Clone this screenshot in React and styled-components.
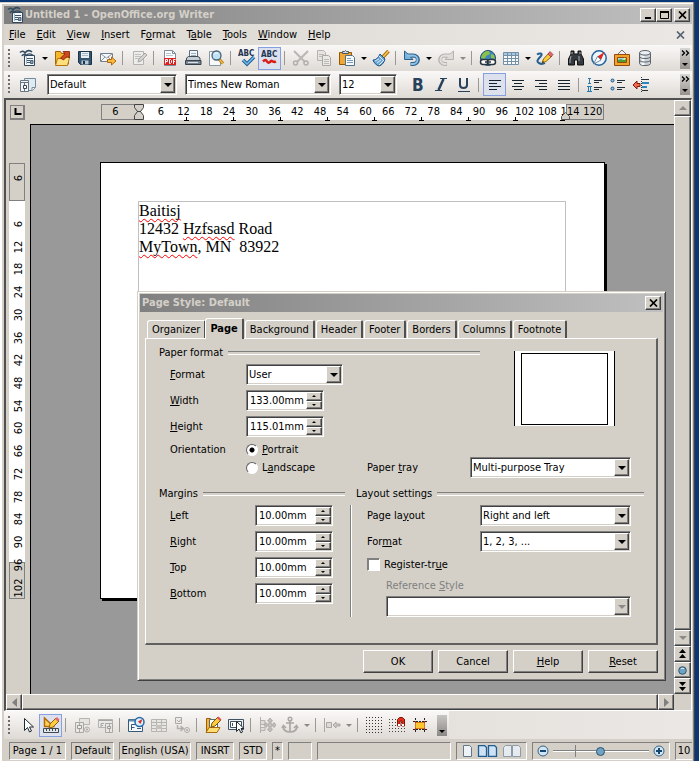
import { useState } from "react";
import styled, { createGlobalStyle, css } from "styled-components";

const hRuler = ["6", "", ...Array.from({ length: 20 }, (_, i) => String((i + 1) * 6))];
const vRuler = ["6", "", ...Array.from({ length: 17 }, (_, i) => String((i + 1) * 6))];

// Text with an underlined access key, marked by "_"
const Hot = ({ text }) => {
  const at = text.indexOf("_");
  if (at < 0) return <span>{text}</span>;
  return (
    <span>
      {text.slice(0, at)}
      <u>{text[at + 1]}</u>
      {text.slice(at + 2)}
    </span>
  );
};

const Svg = ({ w = 18, h = 18, children }) => (
  <svg width={w} height={h} viewBox={`0 0 ${w} ${h}`} fill="none" aria-hidden="true">
    {children}
  </svg>
);

const icons = {
  writer: (
    <Svg>
      <path d="M5.500 6.500h10v10h-10z" fill="#f4f8fb" stroke="#33485a" />
      <path d="M7.500 8v7" stroke="#9db7ca" />
      <path d="M8 9.500h6M8 11.500h3M8 13.500h3" stroke="#42586c" />
      <path d="M11.500 11.500h2.500v3h-2.500z" fill="#7fa5c2" stroke="#33485a" strokeWidth=".8" />
      <path d="M1 3.500c2-2 4-1.500 5 .5 2-3 5-3 7-1" stroke="#2f4a61" strokeWidth="1.600" />
      <path d="M3 7c1-2 3-2 4-.5 2-2 5-2 7 0" stroke="#2f4a61" strokeWidth="1.600" />
    </Svg>
  ),
  open: (
    <Svg>
      <path d="M2.500 15V2.500h5l1 2h7V15z" fill="#f5b72c" stroke="#a5620c" />
      <path d="M2.500 16.500l2-7h4l2-1h6l-2 8z" fill="#ffe07c" stroke="#b8740f" />
      <path d="M7.500 9l4.500-4-2-2.500h6.500v6.500l-2-2-4 4z" fill="#d2481e" stroke="#7e1e08" strokeWidth=".8" />
    </Svg>
  ),
  save: (
    <Svg>
      <path d="M2.500 2.500h13v13h-11l-2-2z" fill="#35556f" stroke="#1d3448" />
      <path d="M5 3h8v6H5z" fill="#e8eef2" />
      <path d="M6 4.500h6M6 6.500h6" stroke="#a9b8c4" />
      <path d="M5.500 11.500h7v4h-7z" fill="#b7cbd9" />
      <path d="M7 12h2v3H7z" fill="#1d3448" />
    </Svg>
  ),
  mail: (
    <Svg>
      <path d="M1.500 4.500h12v8h-12z" fill="#f5f7f8" stroke="#71808c" />
      <path d="M2 5l5.500 4L13 5M2 12l4-4M13 12L9 8" stroke="#8d9aa4" />
      <path d="M8.500 10.500h4v-2.500l4.500 4-4.500 4v-2.500h-4z" fill="#ffb938" stroke="#a55f08" strokeWidth=".9" />
    </Svg>
  ),
  edit: (
    <Svg>
      <path d="M3.500 2.500h10v13h-10z" fill="#ececea" stroke="#b5b3b0" />
      <path d="M5 5.500h6M5 7.500h6M5 9.500h4" stroke="#c2c0bd" />
      <path d="M8 13l1-3 6-6 2 2-6 6z" fill="#d5d3d0" stroke="#a8a6a3" />
    </Svg>
  ),
  pdf: (
    <Svg>
      <path d="M3.500 1.500h8l3 3v12h-11z" fill="#fbfcfd" stroke="#7d8d9a" />
      <path d="M11.500 1.500v3h3" stroke="#7d8d9a" />
      <path d="M5 4.500h5M5 6.500h7" stroke="#b8c3cc" />
      <path d="M3 9h12v7H3z" fill="#dd2020" />
      <path d="M4.500 14.500v-4h2v2h-2M8.500 10.500h1l1 1v2l-1 1h-1zM12.500 15v-4.500h2M12.500 12.500h1.500" stroke="#fff" />
    </Svg>
  ),
  print: (
    <Svg>
      <path d="M5.500 1.500h8v8h-8z" fill="#f1f6fa" stroke="#5d7182" />
      <path d="M7 4.500h5M7 6.500h5" stroke="#9fb0bd" />
      <path d="M2.500 9l2-1.500h9.500l2 1.500v5h-13.500z" fill="#c5ced5" stroke="#3f4d59" />
      <path d="M1.500 11.500h15.500v4H1.500z" fill="#79858f" stroke="#36424c" />
      <path d="M4 13.500h10" stroke="#dce3e8" />
    </Svg>
  ),
  preview: (
    <Svg>
      <path d="M2.500 2.500h9l2 2v12h-11z" fill="#f7f9fb" stroke="#8797a4" />
      <path d="M12 10l4 4.500" stroke="#b67a10" strokeWidth="3" />
      <path d="M12 10l4 4.500" stroke="#f5c14a" strokeWidth="1.200" />
      <circle cx="9.500" cy="6.500" r="4.500" fill="#bfe0f5" stroke="#47637a" strokeWidth="1.300" />
      <path d="M7 5.500c1-2 3-2 4-1" stroke="#fff" />
    </Svg>
  ),
  spell: (
    <Svg>
      <text x="0" y="7" fontSize="8" fontWeight="bold" fill="#1e3550">ABC</text>
      <path d="M5 11l4 4 7-7" stroke="#1f5f96" strokeWidth="3.500" />
      <path d="M5 11l4 4 7-7" stroke="#72bbea" strokeWidth="1.500" />
    </Svg>
  ),
  autospell: (
    <Svg>
      <text x="0" y="8" fontSize="8" fontWeight="bold" fill="#1e3550">ABC</text>
      <path d="M2 12.500c2-2 3-2 4 0 1 2 3 1 4-.5 1-1 2 2 5 .5" stroke="#d71d16" strokeWidth="2.500" />
    </Svg>
  ),
  cut: (
    <Svg>
      <path d="M2 2l11 11M16 2L5 13" stroke="#b9b7b4" strokeWidth="2" />
      <circle cx="3.500" cy="14" r="2" stroke="#b1afac" strokeWidth="1.500" />
      <circle cx="14" cy="14" r="2" stroke="#b1afac" strokeWidth="1.500" />
    </Svg>
  ),
  copy: (
    <Svg>
      <path d="M2.500 1.500h6l2 2v8h-8z" fill="#e6e4e1" stroke="#b5b3b0" />
      <path d="M4 5.500h5M4 7.500h5" stroke="#bdbbb8" />
      <path d="M7.500 6.500h6l2 2v8h-8z" fill="#ebe9e7" stroke="#aaa8a5" />
      <path d="M9 10.500h5M9 12.500h5M9 14.500h5" stroke="#bdbbb8" />
    </Svg>
  ),
  paste: (
    <Svg>
      <path d="M1.500 3.500h12v12h-12z" fill="#f0a832" stroke="#935708" />
      <path d="M4.500 4.500v-2h2l1-1 1 1h2v2z" fill="#d3d9de" stroke="#4c5a66" />
      <path d="M7.500 6.500h7l2 2v8h-9z" fill="#f6f9fb" stroke="#547086" />
      <path d="M9 9.500h4M9 11.500h6M9 13.500h6" stroke="#7d9db4" />
    </Svg>
  ),
  brush: (
    <Svg>
      <path d="M11 8l5.500-6" stroke="#a86a10" strokeWidth="3.500" />
      <path d="M11 8l5.500-6" stroke="#f8cb52" strokeWidth="1.500" />
      <path d="M8 5l5 5c-1 4-3 6-6 7-3-1-5-3-6-6 3 0 5-2 7-6z" fill="#6ba6d6" stroke="#1f527f" />
      <path d="M3 12l4-2M5 14l4-3M7 16l4-4M7 7l5 5" stroke="#d9edfb" />
    </Svg>
  ),
  undo: (
    <Svg>
      <path d="M5 6.500h5c6.500 0 6.500 8.500 0 8.500H7.500" stroke="#2d608b" strokeWidth="4" />
      <path d="M1.500 2v8.500H10L7.500 8h3V5.500H5.500z" fill="#79b2dc" stroke="#2d608b" />
      <path d="M4 6.500h6c6 0 6 8.500 0 8.500H8" stroke="#8cc2e8" strokeWidth="2" />
    </Svg>
  ),
  redo: (
    <Svg>
      <path d="M13 6.500H8c-6.500 0-6.500 8.500 0 8.500h2" stroke="#b5b3b0" strokeWidth="4" />
      <path d="M16.500 2v8.500H8L10.500 8h-3V5.500h5z" fill="#dddbd8" stroke="#b5b3b0" />
      <path d="M14 6.500H8c-6 0-6 8.500 0 8.500h1.500" stroke="#e2e0dd" strokeWidth="2" />
    </Svg>
  ),
  link: (
    <Svg>
      <circle cx="9" cy="9" r="7.500" fill="#3d86bc" stroke="#204c6c" />
      <path d="M3 6c2-4 5-4 7-4l1 3-4 2-1 3-4-1zM12 5l3 1 1 4-4-1z" fill="#8bc04a" />
      <rect x="1.500" y="10.500" width="8" height="5" rx="2.500" fill="#fff" stroke="#29353e" strokeWidth="1.500" />
      <rect x="8.500" y="10.500" width="8" height="5" rx="2.500" fill="#fff" stroke="#29353e" strokeWidth="1.500" />
      <path d="M6 13h6" stroke="#29353e" strokeWidth="1.500" />
    </Svg>
  ),
  table: (
    <Svg>
      <path d="M1.500 3.500h15v12h-15z" fill="#f7fafc" stroke="#7490a6" />
      <path d="M2 4h14v2H2z" fill="#a9c8df" />
      <path d="M1.500 6.500h15M1.500 9.500h15M1.500 12.500h15M5.500 3v12M9.500 3v12M13.500 3v12" stroke="#7490a6" />
    </Svg>
  ),
  draw: (
    <Svg>
      <path d="M1 5.500c3-2 6-1 4 1.500-2 2-3 3-3.500 4.500s3 5 7.500 2.500" stroke="#235f91" strokeWidth="2" />
      <path d="M6 14l1.500-4L13 4l3 3-6 5.500z" fill="#f9cf42" stroke="#93600d" />
      <path d="M12 5l2-2.500L17 5.500 15 8z" fill="#e5686e" stroke="#8d3238" strokeWidth=".7" />
      <path d="M6 14l1-2 1 1z" fill="#222" />
    </Svg>
  ),
  find: (
    <Svg>
      <path d="M4 2h3v3h4V2h3v3l2.500 5v6h-6v-5h-3v5h-6v-6L4 5z" fill="#343a3f" stroke="#111" />
      <path d="M4 7l-1 4v3M12 7v5M5 3v2M13 3v2" stroke="#a8adb1" />
    </Svg>
  ),
  compass: (
    <Svg>
      <circle cx="9" cy="9" r="7.200" fill="#e9f4fc" stroke="#24639b" strokeWidth="1.500" />
      <path d="M14.500 3L11 11 7.500 7.500z" fill="#dd2820" />
      <path d="M3.500 15L11 11 7.500 7.500z" fill="#fff" stroke="#53748e" strokeWidth=".8" />
    </Svg>
  ),
  gallery: (
    <Svg>
      <path d="M5 5l4-4 4 4" stroke="#6e6e6e" />
      <path d="M1.500 5.500h15v11h-15z" fill="#f0a52a" stroke="#96480f" />
      <path d="M4.500 8.500h9v5h-9z" fill="#a5d9f2" stroke="#96480f" />
      <path d="M5 13v-2l3-1 2 1 3-1v3z" fill="#4b9d35" />
      <circle cx="11.500" cy="9.800" r="1" fill="#fff17a" />
    </Svg>
  ),
  db: (
    <Svg>
      <path d="M3.500 4v10.500c0 2.700 11 2.700 11 0V4z" fill="#cdd2d6" stroke="#5c656c" />
      <path d="M5.500 6v10h3V7z" fill="#f6f8f9" />
      <ellipse cx="9" cy="3.800" rx="5.500" ry="2.300" fill="#eceff1" stroke="#5c656c" />
      <path d="M3.500 7.500c0 2.700 11 2.700 11 0M3.500 11c0 2.700 11 2.700 11 0" stroke="#5c656c" />
    </Svg>
  ),
  styles: (
    <Svg>
      <path d="M5.500 2.500h11v9l-3 3h-8z" fill="#dfeaf1" stroke="#758b9b" />
      <path d="M16 11.500h-3v3" stroke="#758b9b" fill="#fff" />
      <path d="M1.500 4.500h8v11h-8z" fill="#f3f5f6" stroke="#687682" />
      <path d="M1.500 6.500h8M5.500 7v8" stroke="#687682" />
      <path d="M4.500 9.500h3v3h-3z" fill="#fff" stroke="#384854" />
    </Svg>
  ),
  bold: (
    <Svg>
      <text x="3" y="15" fontSize="17" fontWeight="bold" fill="#27425a">B</text>
    </Svg>
  ),
  italic: (
    <Svg>
      <path d="M8 2.500h7M3 14.500h7" stroke="#27425a" />
      <path d="M11.500 3L6.500 14" stroke="#27425a" strokeWidth="2.500" />
    </Svg>
  ),
  underline: (
    <Svg>
      <path d="M5 2v7c0 4 7 4 7 0V2" stroke="#27425a" strokeWidth="2" />
      <path d="M3 15.500h12" stroke="#27425a" />
    </Svg>
  ),
  left: <Svg><path d="M3 4.500h12M3 7.500h8M3 10.500h12M3 13.500h8" stroke="#16222c" /></Svg>,
  center: <Svg><path d="M3 4.500h12M5 7.500h8M3 10.500h12M5 13.500h8" stroke="#16222c" /></Svg>,
  right: <Svg><path d="M3 4.500h12M7 7.500h8M3 10.500h12M7 13.500h8" stroke="#16222c" /></Svg>,
  justify: <Svg><path d="M3 4.500h12M3 7.500h12M3 10.500h12M3 13.500h12" stroke="#16222c" /></Svg>,
  numbering: (
    <Svg>
      <path d="M8 4.500h8M8 6.500h5M8 11.500h8M8 13.500h5" stroke="#222e38" />
      <path d="M2 2.500h3M3.500 3v4M2 7.500h3M1 10.500h5M2.500 11v4M4.500 11v4M1 15.500h5" stroke="#2d7aa8" />
    </Svg>
  ),
  bullets: (
    <Svg>
      <path d="M8 4.500h8M8 6.500h5M8 11.500h8M8 13.500h5" stroke="#222e38" />
      <circle cx="3.500" cy="4.500" r="1.500" fill="#8cc8ee" stroke="#205078" />
      <circle cx="3.500" cy="12.500" r="1.500" fill="#8cc8ee" stroke="#205078" />
    </Svg>
  ),
  outdent: (
    <Svg>
      <path d="M9 3.500h8M10 14.500h6" stroke="#222e38" />
      <path d="M10 7h7M10 11h5" stroke="#2a86bb" strokeWidth="2" />
      <path d="M9.500 1v16" stroke="#333" strokeDasharray="1 1" />
      <path d="M1 9l4-4v2.500h3v3H5V13z" fill="#f06a4c" stroke="#861b0b" />
    </Svg>
  ),
  pointer: (
    <Svg>
      <path d="M5.500 2.500v12l3-3 2 4.500 2-1-2-4h4z" fill="#fff" stroke="#1d2935" />
    </Svg>
  ),
  design: (
    <Svg>
      <path d="M2.500 2v8.500h9z" fill="#ffd25c" stroke="#b16c08" strokeWidth="1.500" />
      <path d="M1.500 12.500h15v4h-15z" fill="#e2e7ea" stroke="#3d4a54" />
      <path d="M4.500 13v2M7.500 13v2M10.500 13v2M13.500 13v2" stroke="#3d4a54" />
      <path d="M7 12l1-4 6-6 3 3-6 6z" fill="#ffce3c" stroke="#915d0c" />
      <path d="M13 3l2-2 2.500 2.500L15.500 5.500z" fill="#e96a70" />
    </Svg>
  ),
  control: (
    <Svg>
      <path d="M6.500 5.500v-3h10v6h-6" fill="#e6e4e1" stroke="#b7b5b2" />
      <path d="M2.500 6.500h8v10h-8zM6.500 7v9" fill="#e9e7e4" stroke="#aaa8a5" />
      <path d="M4.500 9.500h4v3h-4z" fill="#eee" stroke="#999" />
      <circle cx="14" cy="13.500" r="2.500" stroke="#b0aeab" />
      <circle cx="14" cy="13.500" r="1" fill="#aaa8a5" />
    </Svg>
  ),
  form: (
    <Svg>
      <path d="M2.500 3.500h14v8h-14z" fill="#ebe9e7" stroke="#b5b3b0" />
      <path d="M2.500 4.500h14M5 11V7.500h3M5 9.500h2" stroke="#a8a6a3" />
      <path d="M9.500 7.500h7v9h-7zM13.500 8v8" fill="#e9e7e4" stroke="#aaa8a5" />
      <path d="M11.500 10.500h3v2h-3z" fill="#eee" stroke="#999" />
    </Svg>
  ),
  formNav: (
    <Svg>
      <path d="M1.500 3.500h14v12h-14z" fill="#f4f8fb" stroke="#385977" />
      <path d="M2 4.500h13" stroke="#5e8bb0" strokeWidth="2" />
      <path d="M4.500 14V8.500H8M4.500 11.500h3M10 12.500h4" stroke="#385977" />
      <circle cx="12.500" cy="6" r="4.500" fill="#dbeefc" stroke="#2769a4" strokeWidth="1.500" />
      <path d="M15.500 3L13.500 8 11 5.500z" fill="#dc2b20" />
    </Svg>
  ),
  grayTable: (
    <Svg>
      <path d="M1.500 3.500h15v12h-15zM2 6.500h14M2 9.500h14M2 12.500h14M6.500 4v11M11.500 4v11" fill="#e8e6e3" stroke="#b7b5b2" />
      <path d="M6 9h6v4H6z" fill="#c4c2bf" />
    </Svg>
  ),
  tabOrder: (
    <Svg>
      <path d="M2.500 1.500h6v6h-6zM4 4l2 2 3-4" fill="#ebe9e7" stroke="#aaa8a5" />
      <path d="M4.500 9v3.500h5M7.500 10l3 2.500-3 2.500" stroke="#b0aeab" strokeWidth="1.500" />
      <circle cx="14" cy="14" r="2.500" stroke="#b0aeab" />
      <circle cx="14" cy="14" r="1" fill="#aaa8a5" />
    </Svg>
  ),
  openDesign: (
    <Svg>
      <path d="M2.500 15V2.500h4l1 2h5V15z" fill="#f6b730" stroke="#9c600c" />
      <path d="M5.500 3.500h8v9h-8z" fill="#fff" stroke="#576b7a" />
      <path d="M2 16.500l3-5h11l-3 5z" fill="#ffdd72" stroke="#a5690e" />
      <path d="M7 11l1-4 6-6 3 3-6 6z" fill="#ffce3c" stroke="#79500d" />
      <path d="M13 2l1.500-1.500 3 3L16 5z" fill="#df4c54" />
    </Svg>
  ),
  autoFocus: (
    <Svg>
      <path d="M1.500 3.500h15v10h-15z" fill="#eef2f5" stroke="#3f5261" />
      <path d="M3.500 5.500h11v6h-11zM5.500 7v3" fill="#fff" stroke="#3f5261" />
      <path d="M9.500 5.500v10l2.500-2.500 2 4 1.500-1-1.500-3.500h3z" fill="#fff" stroke="#1d2935" />
    </Svg>
  ),
  position: (
    <Svg>
      <path d="M2.500 1v16M3 4.500h4v4H3M3 11.500h4v3H3" fill="#dedcd9" stroke="#b3b1ae" />
      <path d="M12 2l2.500 3H13v3h3V6.500L18 9l-2 2.500V10h-3v3h1.500L12 16l-2.500-3H11v-3H8v1.500L6 9l2-2.500V8h3V5H9.500z" fill="#c5c3c0" stroke="#a3a19e" strokeWidth=".8" />
    </Svg>
  ),
  anchor: (
    <Svg>
      <circle cx="9" cy="3" r="1.800" stroke="#aaa8a5" strokeWidth="1.500" />
      <path d="M9 5v11M5 7h8M2 10c0 4 3 6 7 6s7-2 7-6M1 12l1.500-2.500L5 12M13 12l2.500-2.500L17 12" stroke="#aaa8a5" strokeWidth="1.700" />
    </Svg>
  ),
  align: (
    <Svg>
      <path d="M1.500 2v14" stroke="#aaa8a5" />
      <path d="M3.500 6.500h5v5h-5z" fill="#dcdad7" stroke="#aaa8a5" />
      <path d="M10 9l3-3v2h4v2h-4v2z" fill="#cbc9c6" stroke="#aaa8a5" />
    </Svg>
  ),
  grid: (
    <Svg>
      {[1, 4, 7, 10, 13, 16].map((y) => (
        <path key={y} d={`M1 ${y}.500h16`} stroke="#333" strokeDasharray="1 2" />
      ))}
    </Svg>
  ),
  snap: (
    <Svg>
      {[3, 6, 9, 12, 15].map((y) => (
        <path key={y} d={`M1 ${y}.500h16`} stroke="#444" strokeDasharray="1 2" />
      ))}
      <path d="M9.500 10V3.500l2-2h3l2 2V10h-2.500V5h-2v5z" fill="#df301b" stroke="#851307" />
      <path d="M10 8h2v2h-2zM14 8h2v2h-2z" fill="#fff" />
    </Svg>
  ),
  guides: (
    <Svg>
      <path d="M4.500 2v15M13.500 2v15M2 5.500h14M2 13.500h14" stroke="#222" strokeDasharray="2 1" />
      <path d="M4.500 6.500h9v6h-9z" fill="#fdc52f" stroke="#d4761a" />
      <path d="M4 5h1v2H4zM13 5h1v2h-1zM4 12h1v2H4zM13 12h1v2h-1z" fill="#c6301c" />
    </Svg>
  ),
};

const standardBar = [
  ["writer", "New", "drop"], ["open", "Open"], ["save", "Save"], ["mail", "E-mail"], "|",
  ["edit", "Edit File"], "|",
  ["pdf", "Export PDF"], ["print", "Print"], ["preview", "Page Preview"], "|",
  ["spell", "Spellcheck"], ["autospell", "AutoSpellcheck", "on"], "|",
  ["cut", "Cut"], ["copy", "Copy"], ["paste", "Paste", "drop"], ["brush", "Format Paintbrush"], "|",
  ["undo", "Undo", "drop"], ["redo", "Redo", "grayDrop"], "|",
  ["link", "Hyperlink"], ["table", "Insert Table", "drop"], ["draw", "Draw Functions"], "|",
  ["find", "Find"], ["compass", "Navigator"], ["gallery", "Gallery"], ["db", "Data Sources"],
];

const formatBar = [
  ["bold", "Bold"], ["italic", "Italic"], ["underline", "Underline"], "|",
  ["left", "Align Left", "on"], ["center", "Centered"], ["right", "Align Right"], ["justify", "Justified"], "|",
  ["numbering", "Numbering"], ["bullets", "Bullets"], ["outdent", "Decrease Indent"],
];

const designBar = [
  ["pointer", "Select"], ["design", "Design Mode", "on"], "|",
  ["control", "Control"], ["form", "Form"], "|",
  ["formNav", "Form Navigator"], ["grayTable", "Add Field"], ["tabOrder", "Activation Order"], "|",
  ["openDesign", "Open in Design Mode"], ["autoFocus", "Automatic Focus"], "|",
  ["position", "Position and Size"], ["anchor", "Anchor", "grayDrop"], "|",
  ["align", "Alignment", "grayDrop"], "|",
  ["grid", "Display Grid"], ["snap", "Snap to Grid"], ["guides", "Guides"],
];

const Tools = ({ items }) =>
  items.map((item, i) => {
    if (item === "|") return <Separator key={i} />;
    const [icon, label, state] = item;
    const hasDrop = state === "drop" || state === "grayDrop";
    return (
      <ToolGroup key={i}>
        <ToolButton type="button" aria-label={label} $on={state === "on"}>
          {icons[icon]}
        </ToolButton>
        {hasDrop && (
          <DropButton type="button" aria-label={`${label} options`}>
            <Arrow $gray={state === "grayDrop"} />
          </DropButton>
        )}
      </ToolGroup>
    );
  });

const Combo = ({ id, label, value, width, gap, disabled }) => (
  <ComboBox $width={width} $gap={gap}>
    <ComboSelect id={id} aria-label={label} defaultValue={value} disabled={disabled}>
      <option>{value}</option>
    </ComboSelect>
    <ComboArrow>
      <Arrow $big $gray={disabled} />
    </ComboArrow>
  </ComboBox>
);

const Spin = ({ id, value }) => (
  <SpinBox>
    <SpinInput id={id} defaultValue={value} />
    <SpinButtons>
      <SpinButton type="button" aria-label="Increase">
        <Arrow $up />
      </SpinButton>
      <SpinButton type="button" aria-label="Decrease">
        <Arrow />
      </SpinButton>
    </SpinButtons>
  </SpinBox>
);

const Field = ({ id, label, labelWidth, children }) => (
  <FieldRow>
    <FieldLabel htmlFor={id} $width={labelWidth}>
      <Hot text={label} />
    </FieldLabel>
    {children}
  </FieldRow>
);

const CloseGlyph = ({ color = "#000" }) => (
  <Svg w={9} h={8}>
    <path d="M1 0.500l7 7M8 0.500l-7 7" stroke={color} strokeWidth="1.700" />
  </Svg>
);

const Overflow = () => (
  <OverflowButton type="button" aria-label="More controls">
    <Svg w={9} h={6}>
      <path d="M1 0.500L3.500 3 1 5.500M5 0.500L7.500 3 5 5.500" stroke="#000" strokeWidth="1.300" />
    </Svg>
    <Arrow $mid />
  </OverflowButton>
);

const PageStyleDialog = () => {
  const [tab, setTab] = useState("Page");
  const [orientation, setOrientation] = useState("portrait");
  const tabs = ["Organizer", "Page", "Background", "Header", "Footer", "Borders", "Columns", "Footnote"];

  return (
    <Dialog role="dialog" aria-label="Page Style: Default">
      <TitleBar>
        <Title>Page Style: Default</Title>
        <TitleButton type="button" aria-label="Close dialog">
          <CloseGlyph />
        </TitleButton>
      </TitleBar>

      <Tabs role="tablist">
        {tabs.map((name) => (
          <Tab key={name} type="button" role="tab" aria-selected={tab === name} $on={tab === name} onClick={() => setTab(name)}>
            {name}
          </Tab>
        ))}
      </Tabs>

      <Panel>
        <PaperRow>
          <PaperGroup>
            <Legend>Paper format</Legend>
            <Fields>
              <Field id="format" label="_Format" labelWidth={76}>
                <Combo id="format" value="User" width={97} />
              </Field>
              <Field id="width" label="_Width" labelWidth={76}>
                <Spin id="width" value="133.00mm" />
              </Field>
              <Field id="height" label="_Height" labelWidth={76}>
                <Spin id="height" value="115.01mm" />
              </Field>
            </Fields>
          </PaperGroup>
          <Preview>
            <PreviewPage />
          </Preview>
        </PaperRow>

        <OrientationRow>
          <OrientationLabel>Orientation</OrientationLabel>
          <Radios>
            <Choice>
              <Radio type="radio" name="orientation" checked={orientation === "portrait"} onChange={() => setOrientation("portrait")} />
              <Hot text="_Portrait" />
            </Choice>
            <Choice>
              <Radio type="radio" name="orientation" checked={orientation === "landscape"} onChange={() => setOrientation("landscape")} />
              <Hot text="L_andscape" />
            </Choice>
          </Radios>
          <TrayField>
            <Field id="tray" label="Paper _tray" labelWidth={103}>
              <Combo id="tray" value="Multi-purpose Tray" width={161} />
            </Field>
          </TrayField>
        </OrientationRow>

        <SettingsRow>
          <MarginsGroup>
            <Legend>Margins</Legend>
            <Fields>
              {["_Left", "_Right", "_Top", "_Bottom"].map((name) => (
                <Field key={name} id={name} label={name} labelWidth={85}>
                  <Spin id={name} value="10.00mm" />
                </Field>
              ))}
            </Fields>
          </MarginsGroup>
          <Divider />
          <LayoutGroup>
            <Legend>Layout settings</Legend>
            <Fields>
              <Field id="layout" label="Page la_yout" labelWidth={113}>
                <Combo id="layout" value="Right and left" width={151} />
              </Field>
              <Field id="numbers" label="For_mat" labelWidth={113}>
                <Combo id="numbers" value="1, 2, 3, ..." width={151} />
              </Field>
              <RegisterGroup>
                <Choice>
                  <CheckBox type="checkbox" />
                  <Hot text="Register-tr_ue" />
                </Choice>
                <ReferenceField>
                  <label htmlFor="reference">
                    <Hot text="Reference _Style" />
                  </label>
                  <Combo id="reference" value="" width={245} disabled />
                </ReferenceField>
              </RegisterGroup>
            </Fields>
          </LayoutGroup>
        </SettingsRow>
      </Panel>

      <DialogButtons>
        <PushButton type="button">OK</PushButton>
        <PushButton type="button">Cancel</PushButton>
        <PushButton type="button"><Hot text="_Help" /></PushButton>
        <PushButton type="button"><Hot text="_Reset" /></PushButton>
      </DialogButtons>
    </Dialog>
  );
};

const App = () => {
  return (
    <Desktop>
      <GlobalStyle />
      <Window>
        <TitleBar>
          {icons.writer}
          <Title>Untitled 1 - OpenOffice.org Writer</Title>
          <TitleButton type="button" aria-label="Minimize">
            <Svg w={9} h={8}><path d="M1 7h6" stroke="#000" strokeWidth="2" /></Svg>
          </TitleButton>
          <TitleButton type="button" aria-label="Maximize">
            <Svg w={9} h={8}><path d="M.5 0v7.500h8V0M0 1h9" stroke="#000" /><path d="M0 1h9" stroke="#000" strokeWidth="2" /></Svg>
          </TitleButton>
          <TitleButton type="button" aria-label="Close" $apart>
            <CloseGlyph />
          </TitleButton>
        </TitleBar>

        <MenuBar>
          {["_File", "_Edit", "_View", "_Insert", "F_ormat", "T_able", "_Tools", "_Window", "_Help"].map((name) => (
            <MenuItem key={name} type="button"><Hot text={name} /></MenuItem>
          ))}
          <CloseDocument type="button" aria-label="Close document">
            <CloseGlyph color="#556270" />
          </CloseDocument>
        </MenuBar>

        <ToolBar>
          <Grip />
          <Tools items={standardBar} />
          <Overflow />
        </ToolBar>
        <ToolBar>
          <Grip />
          <Tools items={[["styles", "Styles and Formatting"]]} />
          <Combo label="Apply style" value="Default" width={130} gap={8} />
          <Combo label="Font name" value="Times New Roman" width={146} gap={8} />
          <Combo label="Font size" value="12" width={58} gap={8} />
          <Spacer />
          <Tools items={formatBar} />
          <Overflow />
        </ToolBar>

        <Workspace>
          <Editor>
            <RulerRow>
              <TabCorner type="button" aria-label="Tab type">
                <Svg w={8} h={8}><path d="M1.500 0v6h6" stroke="#000" strokeWidth="2" /></Svg>
              </TabCorner>
              <HRuler>
                <RulerEdge $size={38} />
                <RulerBody />
                <RulerEdge $size={38} />
                <HLabels>{hRuler.map((n, i) => <RulerCell key={i}>{n}</RulerCell>)}</HLabels>
                <TabStops>
                  {Array.from({ length: 9 }, (_, i) => <TabStop key={i} />)}
                </TabStops>
                <Indent>
                  <Svg w={11} h={16}>
                    <path d="M.5.500h9v3l-3 4 3 4v4h-9v-4l3-4-3-4z" fill="#d4d0c8" stroke="#444" />
                    <path d="M3 7.500h4" stroke="#444" />
                  </Svg>
                </Indent>
                <EndIndent>
                  <Svg w={9} h={8}><path d="M.5 7.500v-3l4-4 4 4v3z" fill="#d4d0c8" stroke="#555" /></Svg>
                </EndIndent>
              </HRuler>
            </RulerRow>
            <EditorBody>
              <VRulerColumn>
                <VRuler>
                  <RulerEdge $size={38} />
                  <RulerBody />
                  <RulerEdge $size={37} />
                  <VLabels>{vRuler.map((n, i) => <RulerCell key={i}><Turned>{n}</Turned></RulerCell>)}</VLabels>
                </VRuler>
              </VRulerColumn>
              <Canvas>
                <Paper>
                  <TextFrame>
                    <p><Misspelt>Baitisj</Misspelt></p>
                    <p>12432 <Misspelt>Hzfsasd</Misspelt> Road</p>
                    <p><Misspelt>MyTown</Misspelt>, MN&nbsp; 83922</p>
                  </TextFrame>
                </Paper>
              </Canvas>
            </EditorBody>
            <HScroll>
              <ScrollButton type="button" aria-label="Scroll left">
                <Svg w={5} h={9}><path d="M5 0v9L0 4.500z" fill="#808080" /></Svg>
              </ScrollButton>
              <ScrollThumb />
              <ScrollButton type="button" aria-label="Scroll right">
                <Svg w={5} h={9}><path d="M0 0v9l5-4.500z" fill="#808080" /></Svg>
              </ScrollButton>
            </HScroll>
          </Editor>
          <VScroll>
            <ScrollButton type="button" aria-label="Scroll up"><Arrow $big $up $gray /></ScrollButton>
            <ScrollThumb />
            <ScrollButton type="button" aria-label="Scroll down"><Arrow $big $gray /></ScrollButton>
            <ScrollButton type="button" aria-label="Previous page">
              <Svg w={9} h={10}><path d="M4.500 0L8 4H1zM4.500 5L8 9H1z" fill="#000" /></Svg>
            </ScrollButton>
            <ScrollButton type="button" aria-label="Navigation">
              <Svg w={9} h={9}><circle cx="4.500" cy="4.500" r="3.800" fill="#6fa3c4" stroke="#2d526d" /><path d="M3 2.500h3" stroke="#d5e8f4" /></Svg>
            </ScrollButton>
            <ScrollButton type="button" aria-label="Next page">
              <Svg w={9} h={10}><path d="M4.500 5L8 1H1zM4.500 10L8 6H1z" fill="#000" /></Svg>
            </ScrollButton>
          </VScroll>
        </Workspace>

        <DesignBar>
          <DesignTools>
            <Grip />
            <Tools items={designBar} />
            <BarEnd type="button" aria-label="Toolbar options"><Arrow $mid /></BarEnd>
          </DesignTools>
        </DesignBar>

        <StatusBar>
          <StatusCell $width={57}>Page 1 / 1</StatusCell>
          <StatusCell $width={43}>Default</StatusCell>
          <StatusCell $width={72}>English (USA)</StatusCell>
          <StatusCell $width={38}>INSRT</StatusCell>
          <StatusCell $width={28}>STD</StatusCell>
          <StatusCell $width={11}>*</StatusCell>
          <StatusCell $width={24} />
          <StatusCell $grow />
          <StatusCell $width={71}>
            <Svg w={58} h={12}>
              <path d="M.5.500h6l2 2v9h-8z" fill="#eef3f7" stroke="#60788b" />
              <path d="M15.500.500h6l2 2v9h-8zM25.500.500h6l2 2v9h-8z" fill="#cde3f5" stroke="#215d92" strokeWidth="1.300" />
              <path d="M42.500.500h6v11h-8v-9zM49.500.500h6l2 2v9h-8z" fill="#e6ebef" stroke="#8c9ba7" />
            </Svg>
          </StatusCell>
          <StatusCell $width={138}>
            <ZoomButton type="button" aria-label="Zoom out">
              <Svg w={12} h={12}><circle cx="6" cy="6" r="5" fill="#cfe6f7" stroke="#3d5f7c" /><path d="M3 6h6" stroke="#14466e" strokeWidth="2" /></Svg>
            </ZoomButton>
            <ZoomSlider type="range" aria-label="Zoom" min="0" max="100" defaultValue="49" />
            <ZoomButton type="button" aria-label="Zoom in">
              <Svg w={12} h={12}><circle cx="6" cy="6" r="5" fill="#cfe6f7" stroke="#3d5f7c" /><path d="M3 6h6M6 3v6" stroke="#14466e" strokeWidth="2" /></Svg>
            </ZoomButton>
          </StatusCell>
          <StatusCell $width={17} $last>10</StatusCell>
        </StatusBar>
      </Window>
      <PageStyleDialog />
    </Desktop>
  );
};

const GlobalStyle = createGlobalStyle`
  * {
    box-sizing: border-box;
  }

  body {
    margin: 0;
    background-color: #0a3775;
    overflow: hidden;
  }

  body, button, input, select {
    font-family: "DejaVu Sans Condensed", "DejaVu Sans", sans-serif;
    font-size: 11px;
    line-height: 14px;
    color: #000;
  }

  button {
    padding: 0;
  }

  svg {
    display: block;
    flex-shrink: 0;
  }
`;

const raised = css`
  border: 1px solid;
  border-color: #fff #404040 #404040 #fff;
  box-shadow: inset -1px -1px 0 #808080;
  background-color: #d4d0c8;
`;

const sunken = css`
  border: 1px solid;
  border-color: #808080 #fff #fff #808080;
  box-shadow: inset 1px 1px 0 #404040, inset -1px -1px 0 #d4d0c8;
  background-color: #fff;
`;

const Desktop = styled.div`
  position: relative;
  display: flex;
  min-height: 100vh;
  padding: 2px 4px 0 0;
`;

const Window = styled.main`
  flex: 1;
  min-width: 0;
  display: flex;
  flex-direction: column;
  padding: 4px 3px 0 4px;
  background-color: #d4d0c8;
  box-shadow: inset -1px 0 0 #404040, inset -2px 0 0 #808080, inset 0 1px 0 #d4d0c8, inset 2px 2px 0 #fff;
`;

const TitleBar = styled.header`
  display: flex;
  align-items: center;
  height: 18px;
  padding: 0 2px 0 3px;
  background: linear-gradient(to right, #808080, #c0c0c0);
`;

const Title = styled.h1`
  flex: 1;
  margin: 0;
  font-size: 11px;
  color: #d4d0c8;

  ${TitleBar} > &:first-child {
    margin-left: -1px;
  }
`;

const TitleButton = styled.button`
  ${raised}
  display: flex;
  justify-content: center;
  align-items: center;
  width: 16px;
  height: 14px;
  margin-left: ${({ $apart }) => ($apart ? "2px" : "0")};
`;

const MenuBar = styled.nav`
  display: flex;
  align-items: center;
  height: 21px;
  background: linear-gradient(to right, #dad6cf, #ebe7e4);
`;

const MenuItem = styled.button`
  border: none;
  background: none;
  padding: 0 6px 0 5px;
`;

const CloseDocument = styled.button`
  border: none;
  background: none;
  margin: 0 7px 0 auto;
`;

const ToolBar = styled.div`
  display: flex;
  align-items: center;
  height: 26px;
  padding-right: 2px;
  background: linear-gradient(#faf8f7, #dedad5);

  & + & {
    height: 27px;
  }
`;

const Grip = styled.div`
  flex-shrink: 0;
  width: 2px;
  height: 19px;
  margin: 0 6px 0 4px;
  background: repeating-linear-gradient(#706e6a 0 2px, transparent 2px 4px);
`;

const ToolGroup = styled.div`
  display: flex;
  flex-shrink: 0;
`;

const ToolButton = styled.button`
  display: flex;
  justify-content: center;
  align-items: center;
  width: 23px;
  height: 23px;
  border: 1px solid ${({ $on }) => ($on ? "#86a0df" : "transparent")};
  background-color: ${({ $on }) => ($on ? "#dde1ee" : "transparent")};
`;

const DropButton = styled.button`
  display: flex;
  justify-content: center;
  align-items: center;
  width: 11px;
  border: none;
  background: none;
`;

const Separator = styled.div`
  flex-shrink: 0;
  width: 1px;
  height: 14px;
  margin: 0 4px 0 3px;
  background-color: #9a9894;
`;

const Spacer = styled.div`
  width: 9px;
`;

const arrowSize = ({ $big, $mid }) => ($big ? 4 : $mid ? 3 : 2);

const Arrow = styled.span`
  width: 0;
  height: 0;
  border: ${arrowSize}px solid transparent;
  ${({ $up, $gray }) => {
    const edge = $up ? "bottom" : "top";
    const hidden = $up ? "top" : "bottom";
    return css`
      border-${edge}-color: ${$gray ? "#8c8a86" : "#000"};
      border-${hidden}-width: 0;
    `;
  }}

  ${DropButton} & {
    border-width: 3px 3px 0;
  }
`;

const OverflowButton = styled.button`
  display: flex;
  flex-direction: column;
  justify-content: space-between;
  align-items: center;
  width: 10px;
  height: 21px;
  margin-left: auto;
  padding: 2px 0 3px;
  border: none;
  background: linear-gradient(#d8d6d2, #96938e);
`;

const ComboBox = styled.div`
  ${sunken}
  position: relative;
  flex-shrink: 0;
  width: ${({ $width }) => $width}px;
  height: 21px;
  margin-left: ${({ $gap = 0 }) => $gap}px;
`;

const ComboSelect = styled.select`
  appearance: none;
  display: block;
  width: 100%;
  height: 19px;
  padding: 0 18px 0 2px;
  border: none;
  background: none;
`;

const ComboArrow = styled.span`
  ${raised}
  position: absolute;
  top: 1px;
  right: 1px;
  bottom: 1px;
  width: 15px;
  display: flex;
  justify-content: center;
  align-items: center;
  pointer-events: none;
`;

const Workspace = styled.section`
  flex: 1;
  display: flex;
  border: solid;
  border-width: 2px 1px 1px 2px;
  border-color: #505050 #fff #fff #505050;
`;

const Editor = styled.div`
  flex: 1;
  min-width: 0;
  display: flex;
  flex-direction: column;
`;

const RulerRow = styled.div`
  display: flex;
  align-items: center;
  height: 24px;
  padding-left: 4px;
`;

const TabCorner = styled.button`
  ${raised}
  display: flex;
  justify-content: center;
  align-items: center;
  width: 15px;
  height: 15px;
  border-color: #808080;
`;

const HRuler = styled.div`
  position: relative;
  display: flex;
  width: 503px;
  height: 16px;
  margin-left: 76px;
`;

const RulerEdge = styled.div`
  flex: 0 0 ${({ $size }) => $size}px;
  border: 1px solid #808080;
`;

const RulerBody = styled.div`
  flex: 1;
  background-color: #fff;
`;

const HLabels = styled.div`
  position: absolute;
  inset: 0 0 0 3px;
  display: flex;
  align-items: center;
`;

const RulerCell = styled.div`
  flex: 1 1 0;
  min-width: 0;
  min-height: 0;
  display: flex;
  justify-content: center;
  align-items: center;
`;

const TabStops = styled.div`
  position: absolute;
  left: 62px;
  bottom: -1px;
  display: flex;
`;

const TabStop = styled.div`
  width: 5px;
  height: 4px;
  margin: 0 21px;
  border-bottom: 1px solid #000;
  background: linear-gradient(#000, #000) 2px 0 / 1px 3px no-repeat;
`;

const Indent = styled.div`
  position: absolute;
  left: 33px;
  top: 0;
`;

const EndIndent = styled.div`
  position: absolute;
  right: 34px;
  bottom: 0;
`;

const EditorBody = styled.div`
  flex: 1;
  display: flex;
`;

const VRulerColumn = styled.div`
  width: 24px;
  padding: 39px 0 0 3px;
`;

const VRuler = styled.div`
  position: relative;
  display: flex;
  flex-direction: column;
  width: 16px;
  height: 436px;
`;

const VLabels = styled.div`
  position: absolute;
  inset: 4px 0 0 4px;
  display: flex;
  flex-direction: column;
`;

const Turned = styled.span`
  transform: rotate(-90deg);
`;

const Canvas = styled.div`
  flex: 1;
  min-width: 0;
  padding: 37px 0 0 69px;
  border: solid #000;
  border-width: 1px 0 0 1px;
  background-color: #999;
  overflow: hidden;
`;

const Paper = styled.article`
  width: 505px;
  height: 437px;
  padding: 38px 38px 38px 37px;
  border: 1px solid #000;
  background-color: #fff;
  box-shadow: 2px 2px 0 #000;
`;

const TextFrame = styled.div`
  height: 100%;
  border: 1px solid #c0c0c0;
  font-family: "Liberation Serif", serif;
  font-size: 16px;
  line-height: 18px;

  p {
    margin: 0;
  }
`;

const Misspelt = styled.span`
  text-decoration: underline wavy #f00 1px;
  text-decoration-skip-ink: none;
  text-underline-offset: 2px;
`;

const ScrollButton = styled.button`
  ${raised}
  flex: 0 0 16px;
  display: flex;
  justify-content: center;
  align-items: center;
`;

const ScrollThumb = styled.div`
  ${raised}
  flex: 1;
`;

const HScroll = styled.div`
  display: flex;
  height: 16px;
`;

const VScroll = styled.div`
  display: flex;
  flex-direction: column;
  width: 17px;
  padding-bottom: 16px;
`;

const DesignBar = styled.div`
  display: flex;
  height: 28px;
  background: linear-gradient(to right, #dad6cf, #ebe7e4);
`;

const DesignTools = styled.div`
  display: flex;
  align-items: center;
  background: linear-gradient(#faf8f7, #dedad5);
`;

const BarEnd = styled.button`
  display: flex;
  justify-content: center;
  align-items: flex-end;
  width: 10px;
  height: 21px;
  margin: 0 2px 0 6px;
  padding-bottom: 3px;
  border: none;
  background: linear-gradient(#c8c6c2, #8b8985);
`;

const StatusBar = styled.footer`
  display: flex;
  align-items: center;
  gap: 5px;
  height: 22px;
  padding: 2px 0 0 5px;
`;

const StatusCell = styled.div`
  display: flex;
  justify-content: center;
  align-items: center;
  flex: ${({ $grow, $width }) => ($grow ? "1 1 0" : `0 0 ${$width}px`)};
  min-width: 0;
  height: 18px;
  border: 1px solid;
  border-color: #808080 #fff #fff #808080;
  border-right-width: ${({ $last }) => ($last ? "0" : "1px")};
  white-space: nowrap;
`;

const ZoomButton = styled.button`
  margin: 0 4px;
  border: none;
  background: none;
`;

const ZoomSlider = styled.input`
  appearance: none;
  flex: 1;
  min-width: 0;
  height: 12px;
  margin: 0;
  background:
    linear-gradient(#808080, #808080) 22px 0 / 1px 12px no-repeat,
    linear-gradient(#808080 50%, #fff 50%) 0 5px / 100% 2px no-repeat;

  &::-webkit-slider-thumb {
    appearance: none;
    width: 9px;
    height: 9px;
    border: 1px solid #2d526d;
    border-radius: 50%;
    background-color: #6fa3c4;
  }
`;

const Dialog = styled.section`
  position: absolute;
  left: 137px;
  top: 291px;
  width: 529px;
  padding: 1px;
  border: 1px solid;
  border-color: #d4d0c8 #404040 #404040 #d4d0c8;
  box-shadow: inset 1px 1px 0 #fff, inset -1px -1px 0 #808080;
  background-color: #d4d0c8;

  ${TitleBar} {
    margin: 1px 1px 0;
  }
`;

const Tabs = styled.div`
  display: flex;
  align-items: flex-end;
  gap: 1px;
  height: 26px;
  padding-left: 8px;
`;

const Tab = styled.button`
  height: ${({ $on }) => ($on ? "21px" : "18px")};
  margin: ${({ $on }) => ($on ? "0 0 -1px -2px" : "0")};
  padding: 0 4px;
  border: solid;
  border-width: 1px 2px 0 1px;
  border-color: #fff #505050 #fff #fff;
  border-radius: 3px 2px 0 0;
  background-color: #d4d0c8;
  font-weight: ${({ $on }) => ($on ? "bold" : "normal")};
  position: relative;
`;

const Panel = styled.div`
  margin: 0 6px;
  padding: 7px 12px 26px 13px;
  border: solid;
  border-width: 1px 2px 2px 1px;
  border-color: #fff #606060 #606060 #fff;
`;

const PaperRow = styled.div`
  display: flex;
  justify-content: space-between;
`;

const PaperGroup = styled.div`
  width: 321px;
`;

const Legend = styled.h2`
  display: flex;
  align-items: center;
  gap: 5px;
  height: 14px;
  margin: 0 0 4px;
  font-size: 11px;
  font-weight: normal;
  white-space: nowrap;

  &::after {
    content: "";
    flex: 1;
    height: 2px;
    border-top: 1px solid #808080;
    border-bottom: 1px solid #fff;
  }
`;

const Fields = styled.div`
  display: flex;
  flex-direction: column;
  gap: 5px;
  padding-left: 11px;
`;

const FieldRow = styled.div`
  display: flex;
  align-items: center;
  height: 21px;
`;

const FieldLabel = styled.label`
  flex: 0 0 ${({ $width }) => $width}px;
`;

const SpinBox = styled.div`
  ${sunken}
  display: flex;
  width: 78px;
  height: 21px;
  padding: 1px;
`;

const SpinInput = styled.input`
  flex: 1;
  min-width: 0;
  padding: 0 0 0 2px;
  border: none;
  background: none;
`;

const SpinButtons = styled.div`
  display: flex;
  flex-direction: column;
  width: 16px;
`;

const SpinButton = styled.button`
  ${raised}
  flex: 1;
  display: flex;
  justify-content: center;
  align-items: center;
`;

const Preview = styled.div`
  width: 101px;
  height: 75px;
  margin: 5px 29px 0 0;
  padding: 2px 6px 1px;
  border: solid #000;
  border-width: 0 1px;
  background-color: #fff;
`;

const PreviewPage = styled.div`
  height: 100%;
  border: 1px solid #000;
`;

const OrientationRow = styled.div`
  display: flex;
  padding: 4px 0 0 11px;
`;

const OrientationLabel = styled.span`
  width: 76px;
  line-height: 18px;
`;

const Radios = styled.div`
  width: 121px;
`;

const TrayField = styled.div`
  padding-top: 16px;
`;

const Choice = styled.label`
  display: flex;
  align-items: center;
  gap: 4px;
  height: 18px;
`;

const Radio = styled.input`
  appearance: none;
  width: 12px;
  height: 12px;
  margin: 0;
  border: 1px solid;
  border-color: #606060 #fff #fff #606060;
  border-radius: 50%;
  background-color: #fff;

  &:checked {
    background-image: radial-gradient(circle, #000 2px, transparent 3px);
  }
`;

const CheckBox = styled.input`
  ${sunken}
  appearance: none;
  width: 13px;
  height: 13px;
  margin: 0;
  box-shadow: inset 1px 1px 0 #808080;

  &:checked {
    background: #000 content-box;
    padding: 2px;
  }
`;

const SettingsRow = styled.div`
  display: flex;
  padding-top: 9px;
`;

const MarginsGroup = styled.div`
  width: 186px;
`;

const Divider = styled.div`
  width: 2px;
  margin: 18px 4px 0 5px;
  border-left: 1px solid #808080;
  border-right: 1px solid #fff;
`;

const LayoutGroup = styled.div`
  flex: 1;
`;

const RegisterGroup = styled.div`
  display: flex;
  flex-direction: column;
  gap: 7px;

  ${Choice} {
    height: 15px;
  }
`;

const ReferenceField = styled.div`
  display: flex;
  flex-direction: column;
  gap: 3px;
  padding-left: 19px;
  color: #808080;
`;

const DialogButtons = styled.div`
  display: flex;
  justify-content: flex-end;
  gap: 5px;
  padding: 5px 6px 6px;
`;

const PushButton = styled.button`
  ${raised}
  width: 70px;
  height: 23px;
`;

export default App;
